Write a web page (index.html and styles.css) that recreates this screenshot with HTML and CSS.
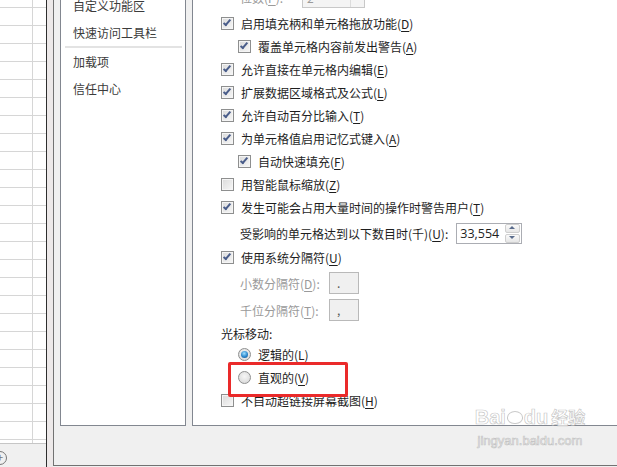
FILE: index.html
```html
<!DOCTYPE html>
<html>
    <head>
        <title>Excel 选项 - 高级</title>
        <link rel="stylesheet" href="styles.css">
    </head>
    <body>
        <div class="screen">
            <div class="sheet">
                <div class="sheet-grid"></div>
                <div class="sheet-tabs"><span class="add-sheet">+</span></div>
            </div>
            <div class="splitter"></div>
            <div class="dialog">
                <div class="dialog-body">
                    <nav class="nav-panel">
                        <ul class="nav-items">
                            <li>自定义功能区</li>
                            <li>快速访问工具栏</li>
                            <li class="nav-sep"></li>
                            <li>加载项</li>
                            <li>信任中心</li>
                        </ul>
                    </nav>
                    <section class="options">
                        <div class="row row-places disabled">
                            <span class="label-indent">位数(<u>P</u>):</span>
                            <span class="select-box"><span>2</span><span class="select-arrow"></span></span>
                        </div>
                        <div class="row"><span class="cb checked"></span><span>启用填充柄和单元格拖放功能(<u>D</u>)</span></div>
                        <div class="row sub"><span class="cb checked"></span><span>覆盖单元格内容前发出警告(<u>A</u>)</span></div>
                        <div class="row"><span class="cb checked"></span><span>允许直接在单元格内编辑(<u>E</u>)</span></div>
                        <div class="row"><span class="cb checked"></span><span>扩展数据区域格式及公式(<u>L</u>)</span></div>
                        <div class="row"><span class="cb checked"></span><span>允许自动百分比输入(<u>T</u>)</span></div>
                        <div class="row"><span class="cb checked"></span><span>为单元格值启用记忆式键入(<u>A</u>)</span></div>
                        <div class="row sub"><span class="cb checked"></span><span>自动快速填充(<u>F</u>)</span></div>
                        <div class="row"><span class="cb"></span><span>用智能鼠标缩放(<u>Z</u>)</span></div>
                        <div class="row"><span class="cb checked"></span><span>发生可能会占用大量时间的操作时警告用户(<u>T</u>)</span></div>
                        <div class="row row-spin">
                            <span class="label-indent">受影响的单元格达到以下数目时(千)(<u>U</u>):</span>
                            <span class="spin">
                                <span class="spin-value">33,554</span>
                                <span class="spin-buttons">
                                    <span class="spin-btn up"></span>
                                    <span class="spin-btn down"></span>
                                </span>
                            </span>
                        </div>
                        <div class="row row-short"><span class="cb checked"></span><span>使用系统分隔符(<u>U</u>)</span></div>
                        <div class="row row-decimal disabled">
                            <span class="label-indent sep-label">小数分隔符(<u>D</u>):</span>
                            <span class="sep-box">.</span>
                        </div>
                        <div class="row row-thousand disabled">
                            <span class="label-indent sep-label">千位分隔符(<u>T</u>):</span>
                            <span class="sep-box">,</span>
                        </div>
                        <div class="row row-heading"><span>光标移动:</span></div>
                        <div class="row sub row-short"><span class="radio checked"></span><span>逻辑的(<u>L</u>)</span></div>
                        <div class="row sub row-tall"><span class="radio"></span><span>直观的(<u>V</u>)</span></div>
                        <div class="row"><span class="cb"></span><span>不自动超链接屏幕截图(<u>H</u>)</span></div>
                    </section>
                </div>
                <div class="dialog-footer"></div>
            </div>

            <div class="mark-box"></div>

            <div class="watermark">
                <div class="wm-logo">Bai<span class="wm-paw"></span>du<span class="wm-cn">经验</span></div>
                <div class="wm-url">jingyan.baidu.com</div>
            </div>
        </div>
    </body>
</html>
```

FILE: styles.css
```css
:root {
    --panel-border: #828790;
    --dialog-bg: #f0f0f0;
    --text: #1e1e1e;
    --disabled: #9a9a9a;
    --grid-line: #d6d6d6;
}

*, *::before, *::after {
    box-sizing: border-box;
}

body {
    margin: 0px;
    font-family: "Noto Sans CJK SC", "Noto Sans", sans-serif;
    font-size: 12px;
    color: var(--text);
}

.screen {
    position: relative;
    display: flex;
    width: 617px;
    height: 467px;
    overflow: hidden;
    background-color: var(--dialog-bg);
}

/* spreadsheet behind the dialog */
.sheet {
    display: flex;
    flex-direction: column;
    width: 47px;
    flex: none;
    border-right: 1px solid #2e2e2e;
}

.sheet-grid {
    height: 444px;
    background-color: #fff;
    background-image:
        linear-gradient(to right, transparent 32px, var(--grid-line) 32px, var(--grid-line) 33px, transparent 33px),
        repeating-linear-gradient(to bottom, transparent 0px, transparent 7px, var(--grid-line) 7px, var(--grid-line) 8px, transparent 8px, transparent 18px);
    border-bottom: 1px solid #c6c6c6;
}

.sheet-tabs {
    position: relative;
    flex: 1;
    background-color: var(--dialog-bg);
}

.add-sheet {
    position: absolute;
    left: -7px;
    top: 7px;
    width: 14px;
    height: 14px;
    border: 1px solid #777;
    border-radius: 50%;
    font-size: 11px;
    line-height: 11px;
    text-align: center;
    color: #777;
}

.splitter {
    width: 6px;
    flex: none;
    background-color: #ede9e9;
}

/* options dialog */
.dialog {
    display: flex;
    flex-direction: column;
    flex: 1;
    height: 466px;
    border-left: 1px solid #727272;
    border-bottom: 1px solid #727272;
}

.dialog-body {
    display: flex;
    gap: 6px;
    height: 426px;
    padding-left: 6px;
}

.dialog-footer {
    flex: 1;
}

.nav-panel {
    width: 126px;
    flex: none;
    background-color: #fff;
    border: 1px solid var(--panel-border);
    border-top: none;
    overflow: hidden;
}

.nav-items {
    list-style: none;
    margin: -8px 0px 0px;
    padding: 0px;
}

.nav-items li {
    height: 27px;
    line-height: 27px;
    padding-left: 12px;
    color: #3b3b3b;
}

.nav-items .nav-sep {
    height: 2px;
    margin: 0px 3px 0px 4px;
    padding: 0px;
    background-color: #e3e3e3;
}

.options {
    flex: 1;
    background-color: #fff;
    border-left: 1px solid var(--panel-border);
    border-bottom: 1px solid var(--panel-border);
    padding-left: 28px;
    overflow: hidden;
}

.row {
    display: flex;
    align-items: center;
    gap: 7px;
    height: 23px;
    white-space: nowrap;
}

.row:first-child {
    margin-top: -17px;
}

.row.sub {
    padding-left: 17px;
}

.row u {
    text-decoration-thickness: 1px;
    text-underline-offset: 2px;
}

.disabled {
    color: var(--disabled);
}

.label-indent {
    padding-left: 19px;
}

.row-places {
    height: 29px;
}

.row-spin {
    height: 28px;
    gap: 8px;
}

.row-short {
    height: 21px;
}

.row-decimal {
    height: 30px;
    gap: 0px;
}

.row-thousand {
    height: 24px;
    gap: 0px;
}

.row-heading {
    height: 22px;
}

.row-tall {
    height: 24px;
}

.sep-label {
    width: 108px;
}

.sep-box {
    width: 30px;
    height: 22px;
    padding-left: 7px;
    line-height: 20px;
    border: 1px solid #b9b9b9;
    background-color: #f0f0f0;
    color: #555;
}

.select-box {
    display: flex;
    align-items: center;
    justify-content: space-between;
    width: 63px;
    height: 20px;
    margin-left: 12px;
    padding-left: 4px;
    border: 1px solid #c8c8c8;
    background-color: #f4f4f4;
}

.select-arrow {
    width: 14px;
    height: 18px;
    border-left: 1px solid #dcdcdc;
    position: relative;
}

.select-arrow::after {
    content: "";
    position: absolute;
    left: 4px;
    top: 8px;
    border: 3px solid transparent;
    border-top: 3px solid #b0b0b0;
}

/* checkbox + radio */
.cb {
    position: relative;
    width: 13px;
    height: 13px;
    flex: none;
    border: 1px solid #8e8f8f;
    background: linear-gradient(135deg, #dadada, #f7f7f7);
    box-shadow: inset 0 0 0 1px #f5f5f5;
}

.cb.checked::after {
    content: "";
    position: absolute;
    left: 3px;
    top: 0px;
    width: 4px;
    height: 8px;
    border-right: 2px solid #4a5d8a;
    border-bottom: 2px solid #4a5d8a;
    transform: rotate(40deg);
}

.radio {
    position: relative;
    width: 13px;
    height: 13px;
    flex: none;
    border: 1px solid #8e8f8f;
    border-radius: 50%;
    background: radial-gradient(circle at 50% 40%, #f6f6f6, #d4d4d4);
}

.radio.checked::after {
    content: "";
    position: absolute;
    left: 2px;
    top: 2px;
    width: 7px;
    height: 7px;
    border-radius: 50%;
    background: radial-gradient(circle at 45% 35%, #9fe0ff, #2a86cc 55%, #174b80);
}

/* spinner */
.spin {
    display: flex;
    align-items: center;
    width: 66px;
    height: 21px;
    border: 1px solid #abadb3;
    background-color: #fff;
}

.spin-value {
    flex: 1;
    padding-left: 3px;
    font-family: "Open Sans", "Liberation Sans", sans-serif;
    font-size: 12.5px;
}

.spin-buttons {
    display: flex;
    flex-direction: column;
    gap: 1px;
    width: 15px;
    height: 19px;
    margin-right: 1px;
}

.spin-btn {
    position: relative;
    flex: 1;
    border: 1px solid #cfcfcf;
    border-radius: 2px;
    background: linear-gradient(#fafafa, #e6e6e6);
}

.spin-btn::after {
    content: "";
    position: absolute;
    left: 3px;
    border: 3px solid transparent;
}

.spin-btn.up::after {
    top: -2px;
    border-bottom: 3px solid #5a6c8c;
}

.spin-btn.down::after {
    top: 1px;
    border-top: 3px solid #5a6c8c;
}

/* annotation drawn over the screenshot */
.mark-box {
    position: absolute;
    left: 228px;
    top: 362px;
    width: 120px;
    height: 35px;
    border: 3px solid #ea2a2a;
    border-radius: 2px;
}

.watermark {
    position: absolute;
    left: 470px;
    top: 400px;
    width: 120px;
    white-space: nowrap;
    text-align: center;
    color: rgba(255, 255, 255, 0.85);
    -webkit-text-stroke: 0.7px rgba(150, 150, 150, 0.55);
    font-family: "Liberation Sans", sans-serif;
}

.wm-logo {
    font-size: 20px;
    font-weight: bold;
    line-height: 34px;
}

.wm-paw {
    display: inline-block;
    width: 16px;
    height: 13px;
    margin: 0px 1px;
    border: 1px solid rgba(150, 150, 150, 0.5);
    border-radius: 50% 50% 45% 45%;
    background-color: rgba(255, 255, 255, 0.8);
}

.wm-cn {
    margin-left: 3px;
    font-family: "Noto Sans CJK SC", sans-serif;
    font-size: 17px;
}

.wm-url {
    font-size: 13px;
    line-height: 14px;
}
```
